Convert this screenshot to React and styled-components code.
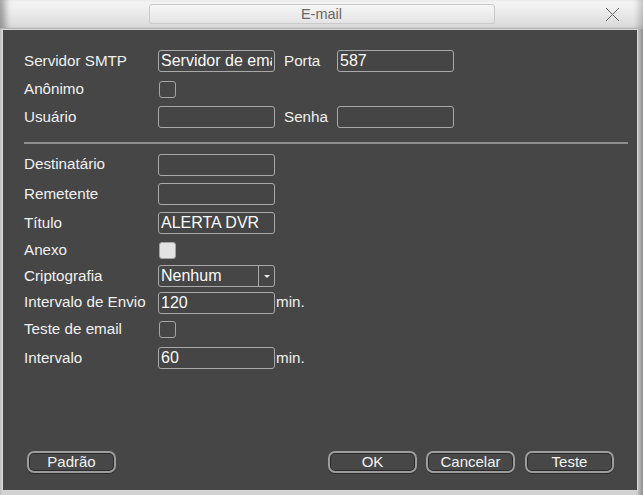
import React from 'react';
import styled, { createGlobalStyle } from 'styled-components';

const Global = createGlobalStyle`
  html, body { margin: 0; padding: 0; }
  body {
    width: 643px; height: 495px; overflow: hidden;
    background: #cfcfcf;
    font-family: "Liberation Sans", Arial, sans-serif;
  }
`;

const Window = styled.div`
  width: 643px; height: 495px;
  display: flex; flex-direction: column;
  box-sizing: border-box;
  background: linear-gradient(to right, #bdbdbd 0, #d2d2d2 2px, #d2d2d2 636px, #8e8e8e 643px);
`;

const TitleBar = styled.div`
  flex: none; height: 28px;
  display: grid; grid-template-columns: 1fr 346px 1fr; align-items: center;
  background: linear-gradient(to bottom, #f7f7f7, #e6e6e6 60%, #d9d9d9);
  box-shadow: inset 9px 0 7px -4px rgba(0,0,0,0.35), inset -9px 0 6px -5px rgba(0,0,0,0.2);
  border-bottom: 1px solid #b4b4b4;
`;

const TitleBox = styled.div`
  grid-column: 2;
  height: 20px; box-sizing: border-box;
  border: 1px solid #c9c9c9; border-radius: 3px;
  background: linear-gradient(to bottom, #f6f6f6, #e4e4e4);
  color: #686868; font-size: 14.5px; line-height: 18px; text-align: center;
`;

const Close = styled.div`
  grid-column: 3; justify-self: end; margin-right: 23px;
  width: 15px; height: 15px; display: flex;
`;

const Body = styled.div`
  flex: 1;
  margin: 0 5px 4px 2px;
  border: 1px solid #d8d8d8;
  background: #464646;
  padding: 17px 9px 17px 21px;
  display: flex; flex-direction: column;
  color: #f0f0f0;
  font-size: 15.2px;
`;

const Row = styled.div`
  display: flex; align-items: center;
  height: ${p => p.$h || 28}px;
`;

const Label = styled.span`
  width: 134px; flex: none; margin-bottom: 2px;
  white-space: nowrap;
`;

const SideLabel = styled.span`
  width: 53px; flex: none; margin-left: 9px; margin-bottom: 2px;
`;

const Field = styled.input`
  width: 117px; height: 22px; box-sizing: border-box; flex: none;
  margin: 0; padding: 0 2px;
  border: 1px solid #a9a9a9; border-radius: 3px;
  background: #454545; color: #fafafa;
  font: inherit; font-size: 16px; outline: none;
`;

const Unit = styled.span`
  margin-left: 1px; margin-bottom: 2px;
`;

const Check = styled.div`
  width: 17px; height: 17px; box-sizing: border-box; margin-left: 1px;
  border: 1px solid #a4a4a4; border-radius: 3px;
  background: ${p => (p.$on ? '#e2e2e2' : 'transparent')};
`;

const Select = styled.div`
  width: 117px; height: 22px; box-sizing: border-box;
  border: 1px solid #a9a9a9; border-radius: 3px;
  display: flex; align-items: stretch;
`;

const SelectText = styled.span`
  flex: 1; padding-left: 2px; line-height: 20px; color: #fafafa; font-size: 16px;
`;

const SelectArrow = styled.span`
  width: 15px; border-left: 1px solid #a9a9a9;
  display: flex; align-items: center; justify-content: center;
  &::after {
    content: ''; display: block;
    border-left: 3px solid transparent; border-right: 3px solid transparent;
    border-top: 3px solid #e8e8e8;
  }
`;

const Separator = styled.div`
  height: 2px; background: #8e8e8e;
  margin: 11px 0 6px 0;
`;

const Section = styled.div`
  display: flex; flex-direction: column;
`;

const ButtonBar = styled.div`
  margin-top: auto;
  display: flex; align-items: center;
  padding: 0 14px 0 3px;
`;

const Spacer = styled.div` flex: 1; `;

const Button = styled.button`
  width: 89px; height: 22px; box-sizing: border-box;
  margin: 0 0 0 ${p => p.$gap || 0}px; padding: 0;
  border: 2px solid #9c9c9c; border-radius: 7px;
  box-shadow: inset 0 0 0 1px #2b2b2b, 0 1px 0 #2b2b2b;
  background: #474747; color: #f2f2f2;
  font-family: "Liberation Sans", Arial, sans-serif; font-size: 15px;
  line-height: 16px;
`;

export default function App() {
  return (
    <>
      <Global />
      <Window>
        <TitleBar>
          <TitleBox>E-mail</TitleBox>
          <Close>
            <svg width="15" height="15" viewBox="0 0 15 15">
              <path d="M1 1 L14 14 M14 1 L1 14" stroke="#666" strokeWidth="1" fill="none" />
            </svg>
          </Close>
        </TitleBar>
        <Body>
          <Section>
            <Row>
              <Label>Servidor SMTP</Label>
              <Field readOnly defaultValue="Servidor de email" />
              <SideLabel>Porta</SideLabel>
              <Field readOnly defaultValue="587" />
            </Row>
            <Row>
              <Label>Anônimo</Label>
              <Check />
            </Row>
            <Row>
              <Label>Usuário</Label>
              <Field readOnly defaultValue="" />
              <SideLabel>Senha</SideLabel>
              <Field readOnly defaultValue="" />
            </Row>
          </Section>
          <Separator />
          <Section>
            <Row $h={29}>
              <Label>Destinatário</Label>
              <Field readOnly defaultValue="" />
            </Row>
            <Row $h={30}>
              <Label>Remetente</Label>
              <Field readOnly defaultValue="" />
            </Row>
            <Row $h={28}>
              <Label>Título</Label>
              <Field readOnly defaultValue="ALERTA DVR" />
            </Row>
            <Row $h={26}>
              <Label>Anexo</Label>
              <Check $on />
            </Row>
            <Row $h={26}>
              <Label>Criptografia</Label>
              <Select>
                <SelectText>Nenhum</SelectText>
                <SelectArrow />
              </Select>
            </Row>
            <Row $h={27}>
              <Label>Intervalo de Envio</Label>
              <Field readOnly defaultValue="120" />
              <Unit>min.</Unit>
            </Row>
            <Row $h={27}>
              <Label>Teste de email</Label>
              <Check />
            </Row>
            <Row $h={30}>
              <Label>Intervalo</Label>
              <Field readOnly defaultValue="60" />
              <Unit>min.</Unit>
            </Row>
          </Section>
          <ButtonBar>
            <Button>Padrão</Button>
            <Spacer />
            <Button>OK</Button>
            <Button $gap={9}>Cancelar</Button>
            <Button $gap={10}>Teste</Button>
          </ButtonBar>
        </Body>
      </Window>
    </>
  );
}
